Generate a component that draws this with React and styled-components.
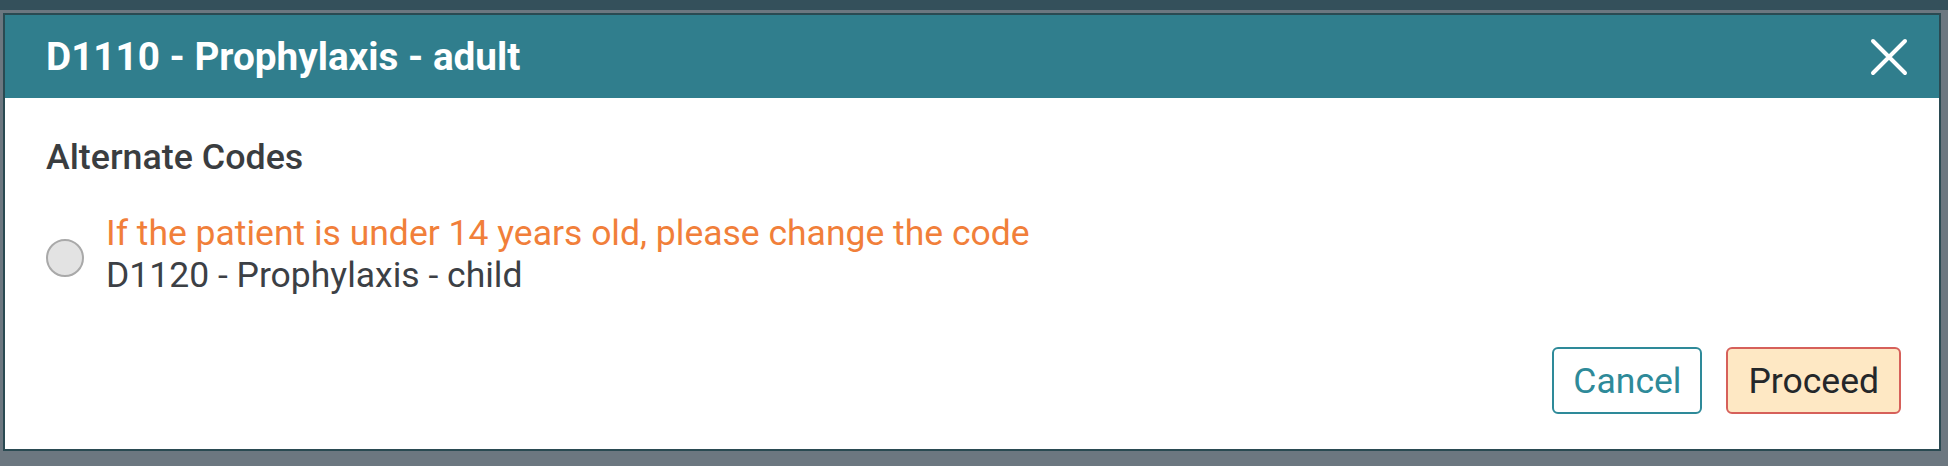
import React from 'react';
import styled, { createGlobalStyle } from 'styled-components';

const GlobalStyle = createGlobalStyle`
    html, body {
        margin: 0;
        padding: 0;
    }
    body {
        font-family: Roboto, "Liberation Sans", Arial, sans-serif;
        background: #6c7780;
    }
`;

const Backdrop = styled.div`
    box-sizing: border-box;
    width: 1948px;
    height: 466px;
    padding: 13px 7px 15px 3px;
    background: linear-gradient(#34505b 0 10px, #6c7780 10px);
`;

const Modal = styled.div`
    box-sizing: border-box;
    height: 100%;
    display: flex;
    flex-direction: column;
    border: 2px solid #2a4a52;
    background: #ffffff;
`;

const Header = styled.div`
    flex: 0 0 83px;
    display: flex;
    align-items: center;
    justify-content: space-between;
    padding: 0 30px 0 41px;
    background: #307e8d;
`;

const Title = styled.h2`
    margin: 0;
    font-size: 38.7px;
    font-weight: 700;
    color: #ffffff;
`;

const CloseButton = styled.button`
    display: flex;
    align-items: center;
    justify-content: center;
    width: 40px;
    height: 40px;
    padding: 0;
    border: 0;
    background: none;
    cursor: pointer;
`;

const Body = styled.div`
    flex: 1;
    display: flex;
    flex-direction: column;
    padding: 38px 38px 35px 41px;
`;

const SectionTitle = styled.h3`
    margin: 0 0 34px;
    font-size: 35.8px;
    line-height: 42px;
    font-weight: 500;
    color: #3a3d40;
`;

const Option = styled.label`
    display: flex;
    align-items: center;
    gap: 22px;
    cursor: pointer;
`;

const Radio = styled.span`
    flex: 0 0 auto;
    box-sizing: border-box;
    width: 38px;
    height: 38px;
    margin-top: 8px;
    border-radius: 50%;
    border: 2px solid #a9a9a9;
    background: #e3e3e3;
`;

const OptionText = styled.div`
    display: flex;
    flex-direction: column;
    font-size: 35.5px;
    line-height: 42px;
`;

const Hint = styled.span`
    color: #f17f3a;
`;

const Code = styled.span`
    color: #3c4045;
`;

const Footer = styled.div`
    margin-top: auto;
    display: flex;
    justify-content: flex-end;
    gap: 24px;
`;

const Button = styled.button`
    box-sizing: border-box;
    height: 67px;
    padding: 0 ${p => (p.$primary ? '20px' : '19px')};
    border-radius: 6px;
    border: 2px solid ${p => (p.$primary ? '#d6605a' : '#2e8a99')};
    background: ${p => (p.$primary ? '#fee8c4' : '#ffffff')};
    color: ${p => (p.$primary ? '#24272a' : '#2e8a99')};
    font-family: Roboto, "Liberation Sans", Arial, sans-serif;
    font-size: 35.5px;
    cursor: pointer;
`;

export default function App() {
    return (
        <>
            <GlobalStyle />
            <Backdrop>
                <Modal>
                    <Header>
                        <Title>D1110 - Prophylaxis - adult</Title>
                        <CloseButton aria-label="Close">
                            <svg width="38" height="38" viewBox="0 0 38 38">
                                <path d="M3 3 L35 35 M35 3 L3 35" stroke="#ffffff" strokeWidth="4" strokeLinecap="round" />
                            </svg>
                        </CloseButton>
                    </Header>
                    <Body>
                        <SectionTitle>Alternate Codes</SectionTitle>
                        <Option>
                            <Radio />
                            <OptionText>
                                <Hint>If the patient is under 14 years old, please change the code</Hint>
                                <Code>D1120 - Prophylaxis - child</Code>
                            </OptionText>
                        </Option>
                        <Footer>
                            <Button>Cancel</Button>
                            <Button $primary>Proceed</Button>
                        </Footer>
                    </Body>
                </Modal>
            </Backdrop>
        </>
    );
}
